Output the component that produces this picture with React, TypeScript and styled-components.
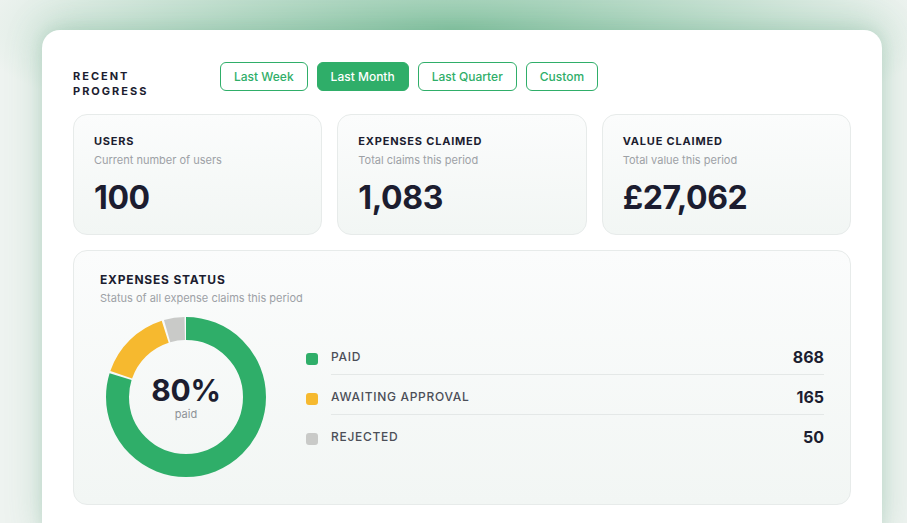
import styled, { createGlobalStyle } from 'styled-components'

const GREEN = '#2fae69'
const YELLOW = '#f6b92f'
const GREY = '#c9cac8'
const INK = '#1c1d30'

const GlobalStyle = createGlobalStyle`
  body {
    margin: 0;
    background: #eef3f0;
    font-family: Inter, "Noto Sans", sans-serif;
    -webkit-font-smoothing: antialiased;
  }
`

const Page = styled.div`
  height: 523px;
  overflow: hidden;
  box-sizing: border-box;
  padding: 30px 25px 0 42px;
  background:
    radial-gradient(ellipse 480px 120px at 50% 30px, rgba(112, 186, 146, 0.75), rgba(112, 186, 146, 0) 100%),
    #eef3f0;
`

const Card = styled.div`
  width: 840px;
  box-sizing: border-box;
  background: #fff;
  border-radius: 18px 18px 0 0;
  padding: 32px 31px 30px 31px;
  box-shadow: 0 -4px 36px rgba(70, 150, 108, 0.28), 0 0 14px rgba(70, 150, 108, 0.12);
`

const Header = styled.div`
  display: flex;
  align-items: flex-start;
  height: 38px;
`

const Heading = styled.div`
  width: 147px;
  flex-shrink: 0;
  margin-top: 7px;
  font-size: 11px;
  font-weight: 700;
  letter-spacing: 2px;
  line-height: 15px;
  color: ${INK};
  span {
    display: block;
    max-width: 90px;
  }
`

const Tabs = styled.div`
  display: flex;
  gap: 9px;
`

const Tab = styled.button<{ $active?: boolean }>`
  height: 29px;
  padding: 0 13px;
  border-radius: 6px;
  border: 1px solid ${GREEN};
  background: ${(p) => (p.$active ? GREEN : '#fff')};
  color: ${(p) => (p.$active ? '#fff' : GREEN)};
  font-family: inherit;
  font-size: 12px;
  font-weight: 500;
  cursor: pointer;
`

const Stats = styled.div`
  display: grid;
  grid-template-columns: repeat(3, 1fr);
  gap: 15px;
  margin-top: 14px;
`

const Panel = styled.div`
  box-sizing: border-box;
  border: 1px solid #e7ebea;
  border-radius: 14px;
  background: linear-gradient(180deg, #fbfcfc 0%, #f2f6f4 100%);
`

const StatCard = styled(Panel)`
  height: 121px;
  padding: 19px 20px;
`

const Label = styled.div`
  font-size: 11px;
  font-weight: 700;
  letter-spacing: 0.8px;
  line-height: 14px;
  color: ${INK};
`

const SubLabel = styled.div`
  margin-top: 5px;
  font-size: 11px;
  line-height: 14px;
  color: #9da1a6;
`

const BigNumber = styled.div`
  margin-top: 12px;
  font-size: 32px;
  font-weight: 700;
  line-height: 38px;
  letter-spacing: -0.4px;
  color: ${INK};
`

const StatusPanel = styled(Panel)`
  margin-top: 15px;
  height: 255px;
  padding: 21px 26px 0 26px;
`

const StatusTitle = styled(Label)`
  font-size: 12px;
  line-height: 16px;
  letter-spacing: 0.8px;
`

const StatusSub = styled(SubLabel)`
  margin-top: 3px;
`

const StatusBody = styled.div`
  display: flex;
  align-items: center;
  margin-top: 12px;
`

const DonutWrap = styled.div`
  position: relative;
  width: 160px;
  height: 160px;
  margin-left: 6px;
  flex-shrink: 0;
`

const DonutCenter = styled.div`
  position: absolute;
  inset: 0;
  display: flex;
  flex-direction: column;
  align-items: center;
  justify-content: center;
`

const Percent = styled.div`
  font-size: 30px;
  font-weight: 700;
  line-height: 34px;
  color: ${INK};
  letter-spacing: -0.3px;
`

const PercentCaption = styled.div`
  margin-top: 1px;
  font-size: 11px;
  line-height: 13px;
  color: #8e9297;
`

const Legend = styled.div`
  flex: 1;
  margin-left: 40px;
  margin-top: -4px;
`

const Row = styled.div`
  display: flex;
  align-items: center;
`

const Dot = styled.span<{ $color: string }>`
  width: 12px;
  height: 12px;
  border-radius: 3px;
  background: ${(p) => p.$color};
  margin: 8px 13px 0 0;
  flex-shrink: 0;
`

const RowBody = styled.div<{ $last?: boolean }>`
  flex: 1;
  height: 40px;
  padding-top: 4px;
  box-sizing: border-box;
  display: flex;
  align-items: center;
  justify-content: space-between;
  border-bottom: 1px solid ${(p) => (p.$last ? 'transparent' : '#e4e8e7')};
`

const RowLabel = styled.span`
  font-size: 12px;
  font-weight: 500;
  letter-spacing: 0.7px;
  color: #4b4e57;
`

const RowValue = styled.span`
  font-size: 16px;
  font-weight: 700;
  color: ${INK};
`

const stats = [
  { label: 'USERS', sub: 'Current number of users', value: '100' },
  { label: 'EXPENSES CLAIMED', sub: 'Total claims this period', value: '1,083' },
  { label: 'VALUE CLAIMED', sub: 'Total value this period', value: '£27,062' },
]

const statuses = [
  { label: 'PAID', value: 868, color: GREEN },
  { label: 'AWAITING APPROVAL', value: 165, color: YELLOW },
  { label: 'REJECTED', value: 50, color: GREY },
]

function Donut() {
  const r = 68.5
  const c = 2 * Math.PI * r
  const total = statuses.reduce((s, x) => s + x.value, 0)
  const gap = 2
  let offset = 0
  return (
    <svg width="160" height="160" viewBox="0 0 160 160">
      <g transform="rotate(-90 80 80)">
        {statuses.map((s) => {
          const len = (s.value / total) * c
          const el = (
            <circle
              key={s.label}
              cx="80"
              cy="80"
              r={r}
              fill="none"
              stroke={s.color}
              strokeWidth="23"
              strokeDasharray={`${len - gap} ${c - len + gap}`}
              strokeDashoffset={-offset}
            />
          )
          offset += len
          return el
        })}
      </g>
    </svg>
  )
}

export default function App() {
  return (
    <>
      <GlobalStyle />
      <Page>
        <Card>
          <Header>
            <Heading>
              <span>RECENT PROGRESS</span>
            </Heading>
            <Tabs>
              <Tab>Last Week</Tab>
              <Tab $active>Last Month</Tab>
              <Tab>Last Quarter</Tab>
              <Tab>Custom</Tab>
            </Tabs>
          </Header>

          <Stats>
            {stats.map((s) => (
              <StatCard key={s.label}>
                <Label>{s.label}</Label>
                <SubLabel>{s.sub}</SubLabel>
                <BigNumber>{s.value}</BigNumber>
              </StatCard>
            ))}
          </Stats>

          <StatusPanel>
            <StatusTitle>EXPENSES STATUS</StatusTitle>
            <StatusSub>Status of all expense claims this period</StatusSub>
            <StatusBody>
              <DonutWrap>
                <Donut />
                <DonutCenter>
                  <Percent>80%</Percent>
                  <PercentCaption>paid</PercentCaption>
                </DonutCenter>
              </DonutWrap>
              <Legend>
                {statuses.map((s, i) => (
                  <Row key={s.label}>
                    <Dot $color={s.color} />
                    <RowBody $last={i === statuses.length - 1}>
                      <RowLabel>{s.label}</RowLabel>
                      <RowValue>{s.value}</RowValue>
                    </RowBody>
                  </Row>
                ))}
              </Legend>
            </StatusBody>
          </StatusPanel>
        </Card>
      </Page>
    </>
  )
}
